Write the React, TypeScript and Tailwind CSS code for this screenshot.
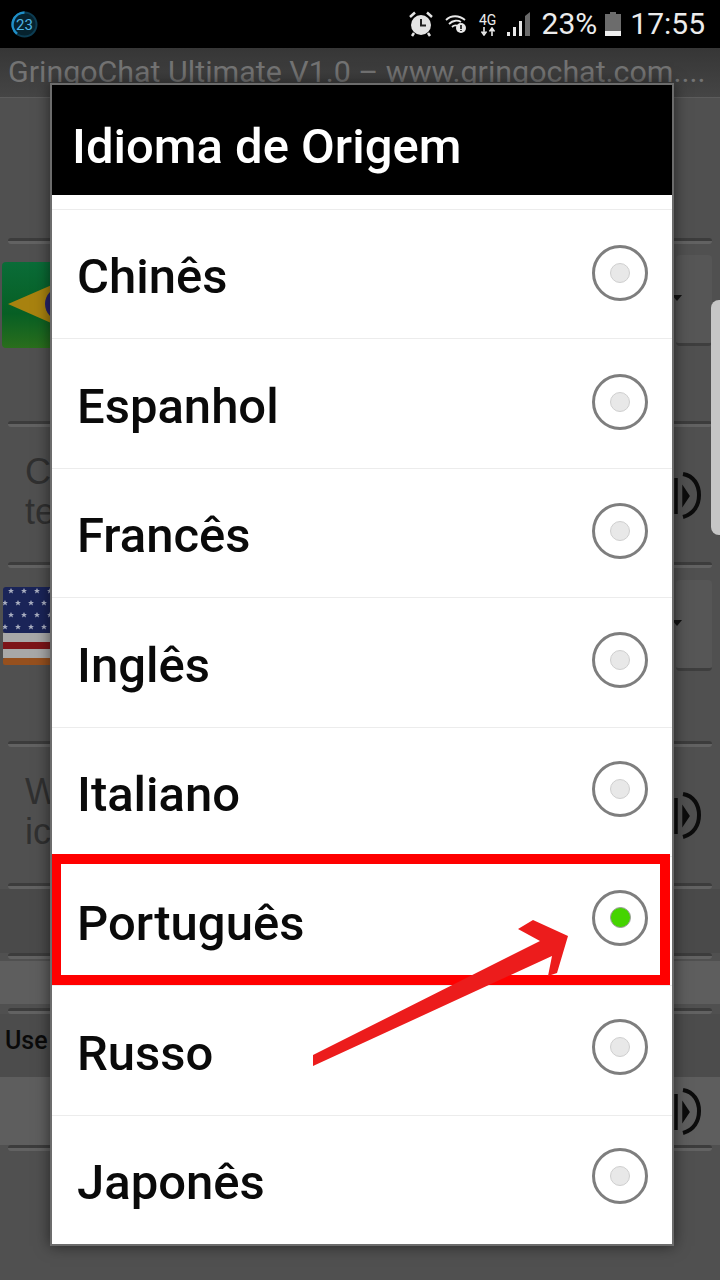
import React from "react";

const LANGUAGES = ["Chinês", "Espanhol", "Francês", "Inglês", "Italiano", "Português", "Russo", "Japonês"];

// radios sit on a 129px pitch, the rows on 129.3px
const RADIO_NUDGE = ["-mt-[3px]", "-mt-[3px]", "-mt-[3px]", "-mt-[5px]", "-mt-[5px]", "-mt-[7px]", "-mt-[7px]", "-mt-[7px]"];

const Divider = ({ className = "" }: { className?: string }) => (
  <div className={`mx-2 h-[6px] shrink-0 rounded-sm border-t-[3px] border-[#3c3c3c] bg-[#626262] ${className}`} />
);

const Speaker = () => (
  <svg width="36" height="50" viewBox="0 0 36 50" className="mr-[16px] shrink-0">
    <path d="M8 8V44" stroke="#0c0c0c" strokeWidth="3.5" fill="none" />
    <path d="M15 17L21 26L15 35Z" fill="#0c0c0c" stroke="#0c0c0c" strokeWidth="1.5" />
    <path d="M15 4C26 6 31 15 31 25C31 35 26 44 15 47" stroke="#0c0c0c" strokeWidth="4" fill="none" />
  </svg>
);

const BrazilFlag = () => (
  <svg width="48" height="86" viewBox="0 0 48 86" className="ml-[2px] shrink-0">
    <defs>
      <linearGradient id="br" x1="0" y1="0" x2="0" y2="1">
        <stop offset="0" stopColor="#0a6c38" />
        <stop offset="0.6" stopColor="#075f24" />
        <stop offset="1" stopColor="#2a6e1c" />
      </linearGradient>
    </defs>
    <rect width="70" height="86" rx="4" fill="url(#br)" />
    <path d="M6 42L70 14V70Z" fill="#a8820f" />
    <circle cx="60" cy="42" r="17" fill="#27246b" />
  </svg>
);

const Star = ({ x, y }: { x: number; y: number }) => (
  <path transform={`translate(${x} ${y})`} d="M0-3L.9-1H3L1.3.3 2 2.6 0 1.2-2 2.6-1.3.3-3-1H-.9Z" fill="#a9aec0" />
);

const UsFlag = () => (
  <svg width="47" height="78" viewBox="0 0 47 78" className="ml-[3px] shrink-0">
    <rect width="60" height="46" rx="3" fill="#1a2458" />
    {[4, 16, 28, 40].map((y, i) =>
      [0, 1, 2, 3, 4].map((n) => <Star key={`${y}-${n}`} x={(i % 2 ? 2 : 8) + n * 13} y={y} />),
    )}
    <rect y="46" width="60" height="9" fill="#a8a8a8" />
    <rect y="55" width="60" height="7" fill="#7d1418" />
    <rect y="62" width="60" height="9" fill="#a8a8a8" />
    <rect y="71" width="60" height="7" rx="2" fill="#96501e" />
  </svg>
);

const SpinnerBox = () => (
  <div className="relative mr-2 h-[91px] w-[36px] shrink-0 rounded-sm border-b-[3px] border-[#3e3e3e] bg-[#565656]">
    <div className="absolute left-[-4px] top-[40px] h-0 w-0 border-x-[5px] border-t-[6px] border-x-transparent border-t-[#111]" />
  </div>
);

const StatusBar = () => (
  <div className="flex h-12 shrink-0 items-center justify-between bg-black pl-[11px] pr-[15px] text-[#ececec]">
    <svg width="27" height="27" viewBox="0 0 27 27">
      <circle cx="13.5" cy="13.5" r="12" fill="#06222e" stroke="#0c3c52" strokeWidth="2" />
      <path d="M13.5 1.5A12 12 0 0 0 6 22.8" fill="none" stroke="#1f8fc8" strokeWidth="2.5" />
      <text x="13.5" y="19" textAnchor="middle" fontSize="15" fill="#4fb4e4" fontFamily="Roboto, sans-serif">23</text>
    </svg>
    <div className="flex items-center">
      <svg width="24" height="26" viewBox="0 0 24 26" className="mr-[12px]">
        <circle cx="12" cy="14" r="10" fill="#e4e4e4" />
        <path d="M12 8V14.5H17" stroke="#222" strokeWidth="2" fill="none" />
        <path d="M1 6L6 1.5M23 6L18 1.5" stroke="#e4e4e4" strokeWidth="2.5" />
        <path d="M5 22L3 25M19 22L21 25" stroke="#e4e4e4" strokeWidth="2.5" />
      </svg>
      <svg width="22" height="20" viewBox="0 0 22 20" className="mr-[11px]">
        <path d="M1 6C6 1 14 1 20 6M4 10C8 6 13 6 16 8M7 13C9 11 11 11 13 12" stroke="#e8e8e8" strokeWidth="1.8" fill="none" />
        <circle cx="16" cy="14" r="5" fill="#e8e8e8" />
        <path d="M16 11V15M16 16V17" stroke="#111" strokeWidth="1.6" />
      </svg>
      <div className="mr-[9px] flex w-5 flex-col items-center">
        <span className="font-['Roboto',sans-serif] text-[14px] leading-[14px]">4G</span>
        <svg width="16" height="9" viewBox="0 0 16 9">
          <path d="M4 0V6M1.5 4.5L4 8 6.5 4.5M12 9V3M9.5 4.5L12 1 14.5 4.5" stroke="#e8e8e8" strokeWidth="1.6" fill="none" />
        </svg>
      </div>
      <svg width="24" height="24" viewBox="0 0 24 24" className="mr-[11px]">
        <path d="M0 24H3V20H0ZM6 24H9V15H6ZM12 24H15V9H12Z" fill="#e8e8e8" />
        <path d="M18 24H23V0L18 4Z" fill="#6a6a6a" />
      </svg>
      <span className="font-['Roboto',sans-serif] text-[30px] leading-none">23%</span>
      <svg width="16" height="24" viewBox="0 0 16 24" className="ml-[8px] mr-[9px]">
        <path d="M5 0H11V2H16V24H0V2H5Z" fill="#6c6c6c" />
        <rect y="19" width="16" height="5" fill="#efefef" />
      </svg>
      <span className="font-['Roboto',sans-serif] text-[30px] leading-none">17:55</span>
    </div>
  </div>
);

const Background = () => (
  <div className="flex flex-col font-['Liberation_Sans',sans-serif] text-[#303030]">
    <Divider className="mt-[140px]" />
    <div className="mt-[11px] flex h-[91px] items-start justify-between">
      <div className="mt-[7px]"><BrazilFlag /></div>
      <SpinnerBox />
    </div>
    <Divider className="mt-[75px]" />
    <div className="flex h-[135px] items-center justify-between pl-[25px]">
      <p className="pb-[6px] text-[36px] leading-[40px]">C<br />te</p>
      <Speaker />
    </div>
    <Divider />
    <div className="flex h-[173px] items-start justify-between pt-[12px]">
      <div className="mt-[7px]"><UsFlag /></div>
      <SpinnerBox />
    </div>
    <Divider />
    <div className="flex h-[136px] items-center justify-between pl-[25px]">
      <p className="pb-[6px] text-[36px] leading-[40px]">W<br />ic</p>
      <Speaker />
    </div>
    <Divider />
    <div className="h-[64px] bg-[#4a4a4a]" />
    <Divider />
    <div className="mt-[2px] h-[43px] bg-[#5e5e5e]" />
    <Divider className="mt-[4px]" />
    <div className="flex h-[63px] items-center bg-[#4c4c4c] pb-[10px] pl-[5px] font-['Roboto',sans-serif] text-[25px] font-medium text-[#0a0a0a]">Use</div>
    <div className="flex h-[68px] items-center justify-end bg-[#5e5e5e]">
      <Speaker />
    </div>
    <Divider />
  </div>
);

const Radio = ({ checked }: { checked: boolean }) => (
  <div className="flex h-14 w-14 shrink-0 items-center justify-center rounded-full border-[3px] border-[#7e7e7e] bg-white">
    {checked ? (
      <div className="h-[21px] w-[21px] rounded-full border border-[#9a9a9a] bg-[#45d400]" />
    ) : (
      <div className="h-[20px] w-[20px] rounded-full border border-[#cfcfcf] bg-[#e8e8e8]" />
    )}
  </div>
);

const Dialog = () => (
  <div className="absolute left-[50px] top-[83px] flex h-[1163px] w-[624px] flex-col overflow-hidden border-2 border-[#6c6c6c] shadow-[0_0_14px_rgba(0,0,0,0.55)]">
    <div className="flex h-[110px] shrink-0 items-center bg-black pl-[20px] pt-[12px] font-['Roboto',sans-serif] text-[49px] font-medium leading-none text-white">
      Idioma de Origem
    </div>
    <div className="flex flex-1 flex-col bg-white pt-[14px]">
      {LANGUAGES.map((name, i) => (
        <div
          key={name}
          className="flex flex-1 items-center justify-between border-t border-[#ececec] pl-[25px] pr-[24px] font-['Roboto',sans-serif] text-[49px] font-medium text-[#0a0a0a]"
        >
          <span className="mt-[6px]">{name}</span>
          <div className={RADIO_NUDGE[i]}><Radio checked={i === 5} /></div>
        </div>
      ))}
    </div>
    {/* red marker + arrow from the annotated screenshot */}
    <div className="absolute left-[-1px] top-[769px] h-[131px] w-[619px] border-[10px] border-[#ff0000]" />
    <svg width="270" height="160" viewBox="0 0 270 160" className="absolute left-[261px] top-[832px]">
      <path d="M0 138L227 24 205 12 220 3 255 19 244 56 235 59 239 39 0 149Z" fill="#ec1c1c" />
    </svg>
  </div>
);

export default function App() {
  return (
    <div className="relative flex h-[1280px] w-[720px] flex-col overflow-hidden bg-[#505050]">
      <StatusBar />
      <div className="h-[50px] shrink-0 overflow-hidden whitespace-nowrap border-b border-[#5c5c5c] bg-gradient-to-b from-[#363636] to-[#454545] pl-2 pt-[6px] font-['Roboto',sans-serif] text-[30.4px] leading-[36px] text-[#737373]">
        GringoChat Ultimate V1.0 – www.gringochat.com....
      </div>
      <Background />
      {/* scrollbar thumb */}
      <div className="absolute right-0 top-[300px] h-[235px] w-[9px] rounded-l-lg bg-[#c6c6c6]" />
      <Dialog />
    </div>
  );
}
